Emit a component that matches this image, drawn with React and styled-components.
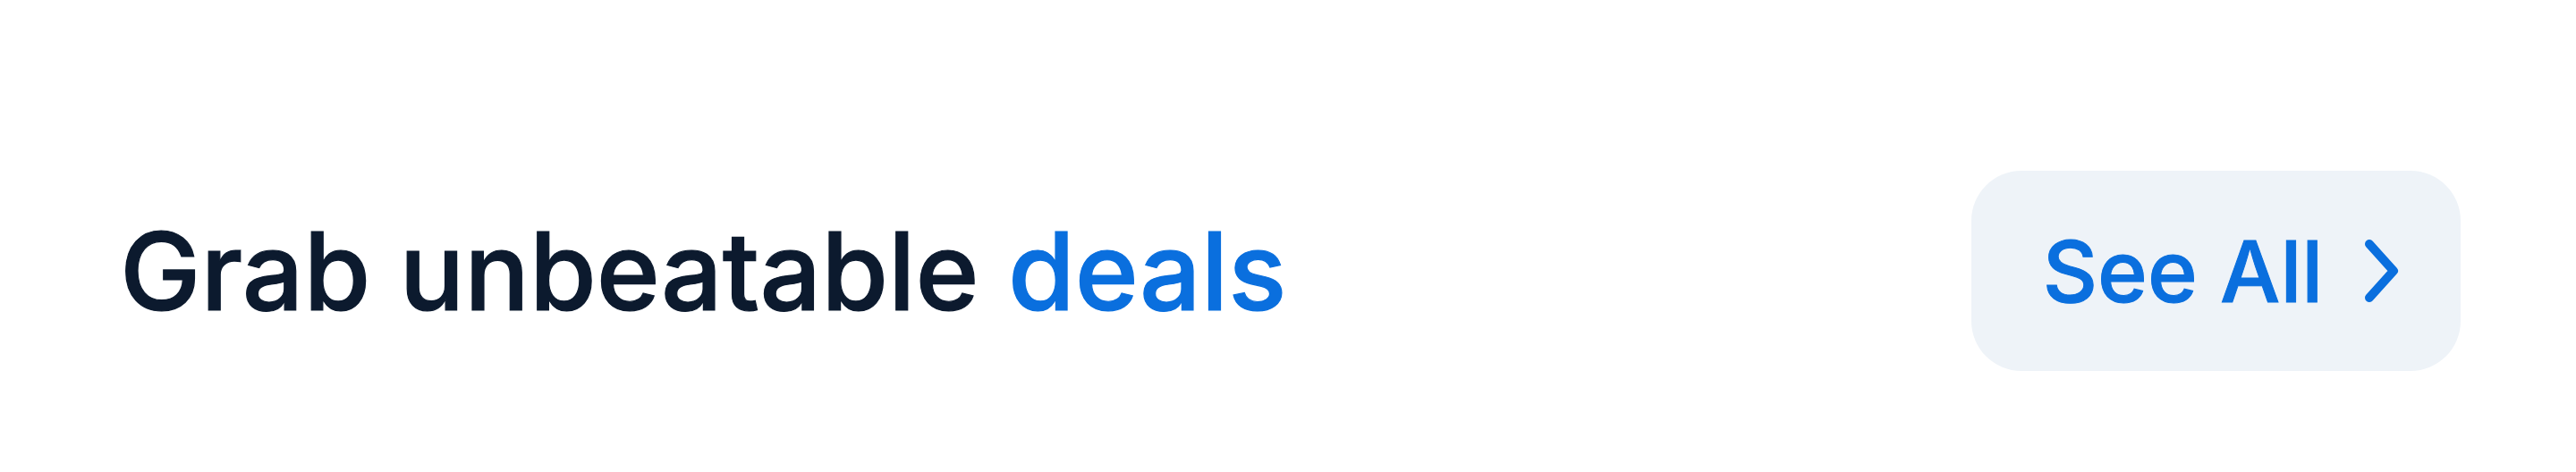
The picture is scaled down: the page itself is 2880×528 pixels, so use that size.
import React from "react";
import styled, { createGlobalStyle } from "styled-components";

const GlobalStyle = createGlobalStyle`
  body {
    margin: 0;
    background: #ffffff;
    font-family: Inter, "Noto Sans", sans-serif;
  }
`;

const Header = styled.section`
  display: flex;
  align-items: center;
  justify-content: space-between;
  height: 528px;
  box-sizing: border-box;
  padding: 78px 129px 0 134px;
`;

const Title = styled.h2`
  margin: 0;
  font-family: Inter, "Noto Sans", sans-serif;
  font-size: 121px;
  font-weight: 500;
  line-height: 1;
  color: #0c1a2e;
  -webkit-text-stroke: 1.2px currentColor;
`;

const Accent = styled.span`
  color: #0a6fde;
`;

const SeeAllButton = styled.button`
  display: flex;
  align-items: center;
  justify-content: center;
  gap: 46px;
  width: 547px;
  height: 224px;
  padding: 0 0 0 12px;
  border: 0;
  border-radius: 56px;
  background: #eef3f8;
  color: #0a6fde;
  font-family: Inter, "Noto Sans", sans-serif;
  font-size: 95px;
  font-weight: 500;
  -webkit-text-stroke: 1px currentColor;
  cursor: pointer;
  svg {
    width: 40px;
    height: 72px;
  }
`;

const Chevron = () => (
  <svg viewBox="0 0 40 72" fill="none">
    <path
      d="M6 6 L33 36 L6 66"
      stroke="currentColor"
      strokeWidth="10"
      strokeLinecap="round"
      strokeLinejoin="round"
    />
  </svg>
);

export default function App() {
  return (
    <>
      <GlobalStyle />
      <Header>
        <Title>
          Grab unbeatable <Accent>deals</Accent>
        </Title>
        <SeeAllButton>
          See All
          <Chevron />
        </SeeAllButton>
      </Header>
    </>
  );
}
